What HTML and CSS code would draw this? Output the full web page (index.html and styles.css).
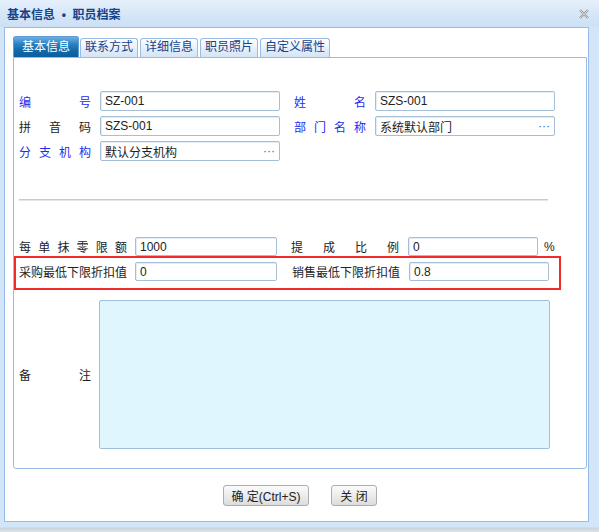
FILE: index.html
```html
<!DOCTYPE html>
<html lang="zh-CN">
<head>
    <meta charset="UTF-8">
    <title>职员档案</title>
    <link rel="stylesheet" href="styles.css">
</head>
<body>
    <div class="window">
        <div class="titlebar">
            <span class="title">基本信息 &nbsp;•&nbsp; 职员档案</span>
            <svg class="close" width="10" height="10" viewBox="0 0 10 10">
                <path d="M1 1 L9 9 M9 1 L1 9" stroke="#9a9a9a" stroke-width="2.2"/>
                <path d="M1 1 L9 9 M9 1 L1 9" stroke="#e8e8e8" stroke-width="0.7"/>
            </svg>
        </div>
        <div class="panel">
            <div class="tabs">
                <div class="tab active">基本信息</div>
                <div class="tab">联系方式</div>
                <div class="tab">详细信息</div>
                <div class="tab">职员照片</div>
                <div class="tab">自定义属性</div>
            </div>
            <div class="tab-body">
                <div class="row">
                    <label class="lbl blue">编号</label>
                    <div class="field">SZ-001</div>
                    <label class="lbl blue right">姓名</label>
                    <div class="field">SZS-001</div>
                </div>
                <div class="row">
                    <label class="lbl">拼音码</label>
                    <div class="field">SZS-001</div>
                    <label class="lbl blue right">部门名称</label>
                    <div class="field">系统默认部门<span class="dots">···</span></div>
                </div>
                <div class="row">
                    <label class="lbl blue">分支机构</label>
                    <div class="field">默认分支机构<span class="dots">···</span></div>
                </div>

                <div class="sep"></div>

                <div class="row row-sm">
                    <label class="lbl lbl-wide">每单抹零限额</label>
                    <div class="field f-left">1000</div>
                    <label class="lbl lbl-wide right2">提成比例</label>
                    <div class="field f-rate">0</div>
                    <span class="unit">%</span>
                </div>
                <div class="highlight">
                    <div class="row row-sm">
                        <label class="lbl lbl-wide">采购最低下限折扣值</label>
                        <div class="field f-left">0</div>
                        <label class="lbl lbl-wide right3">销售最低下限折扣值</label>
                        <div class="field f-disc">0.8</div>
                    </div>
                </div>

                <div class="memo-row">
                    <label class="lbl">备注</label>
                    <div class="memo"></div>
                </div>
            </div>
            <div class="buttons">
                <button class="btn btn-ok">确 定(Ctrl+S)</button>
                <button class="btn btn-close">关 闭</button>
            </div>
        </div>
    </div>
</body>
</html>
```

FILE: styles.css
```css
* {
    margin: 0;
    padding: 0;
    box-sizing: border-box;
}

body {
    width: 599px;
    height: 532px;
    overflow: hidden;
    font-family: "Liberation Sans", "Noto Sans CJK SC", sans-serif;
    font-size: 12px;
    color: #222;
    background: linear-gradient(to bottom, #d3e5f8 0, #d3e5f8 527px, #c9d3dd 528px, #dfe3e8 532px);
}

.window {
    display: flex;
    flex-direction: column;
    height: 532px;
}

.titlebar {
    height: 27px;
    display: flex;
    align-items: center;
    padding: 0 10px 0 7px;
    background: linear-gradient(to bottom, #e6f0fb, #d4e5f7 60%, #cde0f5);
}

.title {
    color: #15428b;
    font-weight: bold;
    font-size: 12px;
}

.close {
    margin-left: auto;
}

.panel {
    margin: 0 10px 0 4px;
    height: 495px;
    background: #fff;
    border: 1px solid #99bbe8;
    padding: 8px 1px 0 8px;
}

/* tabs */
.tabs {
    display: flex;
    align-items: flex-end;
    height: 21px;
}

.tab {
    height: 19px;
    line-height: 17px;
    padding: 0 4px;
    margin-right: 2px;
    border: 1px solid #99bbe8;
    border-bottom: none;
    border-radius: 3px 3px 0 0;
    background: linear-gradient(to bottom, #ffffff, #e4eef9 60%, #d4e4f5);
    color: #15428b;
}

.tab.active {
    height: 21px;
    line-height: 20px;
    padding: 0 8px;
    margin-right: 1px;
    border-color: #5d9bd0;
    background: linear-gradient(to bottom, #6fb0e2, #2a82c4 35%, #1068a8 70%, #0c5e9c);
    color: #fff;
}

.tab-body {
    border: 1px solid #99bbe8;
    border-radius: 0 0 3px 3px;
    padding: 33px 0 19px 5px;
}

/* form rows */
.row {
    display: flex;
    align-items: center;
    height: 20px;
    margin-bottom: 5px;
}

.row-sm {
    height: 19px;
    margin-bottom: 0;
}

.lbl {
    width: 72px;
    text-align: justify;
    text-align-last: justify;
    text-justify: inter-character;
    white-space: nowrap;
}

.lbl.blue {
    color: #1f2cf0;
}

.lbl.right {
    margin-left: 14px;
}

.lbl-wide {
    width: 108px;
}

.lbl.right2 {
    margin-left: 14px;
}

.lbl.right3 {
    margin-left: 15px;
}

.field {
    width: 180px;
    height: 100%;
    margin-left: 9px;
    display: flex;
    align-items: center;
    padding-left: 4px;
    border: 1px solid #a5bfd6;
    border-radius: 2px;
    box-shadow: inset 1px 1px 0 #e4edf5;
    background: #fff;
    white-space: nowrap;
}

.field.f-left {
    width: 142px;
    margin-left: 8px;
}

.field.f-rate {
    width: 130px;
}

.field.f-disc {
    width: 140px;
}

.dots {
    margin-left: auto;
    margin-right: 4px;
    color: #3a68a8;
    letter-spacing: 0;
}

.unit {
    margin-left: 6px;
}

.sep {
    width: 529px;
    height: 2px;
    margin: 38px 0 36px;
    background: #c9c9c9;
    border-bottom: 1px solid #e6e6e6;
}

.highlight {
    width: 547px;
    margin-left: -5px;
    border: 2px solid #f32a2a;
    padding: 4px 0 7px 3px;
}

.memo-row {
    display: flex;
    align-items: center;
    margin-top: 10px;
}

.memo {
    width: 451px;
    height: 149px;
    margin-left: 8px;
    background: #e0f6ff;
    border: 1px solid #9fc0d6;
    border-radius: 2px;
}

/* buttons */
.buttons {
    display: flex;
    justify-content: center;
    gap: 22px;
    margin-top: 16px;
}

.btn {
    height: 21px;
    padding: 0 6px;
    font-family: "Liberation Sans", "Noto Sans CJK SC", sans-serif;
    font-size: 12px;
    color: #222;
    border: 1px solid #a8aeb5;
    border-radius: 3px;
    background: linear-gradient(to bottom, #fbfbfb, #ececec 50%, #dcdcdc);
}

.btn-ok {
    width: 86px;
}

.btn-close {
    width: 46px;
}
```
